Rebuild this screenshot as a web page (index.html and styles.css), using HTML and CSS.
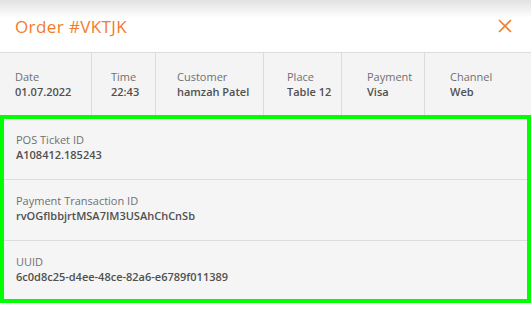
FILE: index.html
```
<!DOCTYPE html>
<html lang="en">
<head>
    <meta charset="UTF-8">
    <meta name="viewport" content="width=device-width, initial-scale=1.0">
    <title>Order #VKTJK</title>
    <link rel="stylesheet" href="styles.css">
</head>
<body>
    <div class="modal">
        <!-- Header -->
        <div class="modal-header">
            <h1 class="modal-title">Order #VKTJK</h1>
            <button class="close-btn" aria-label="Close">
                <svg width="14" height="14" viewBox="0 0 14 14">
                    <path d="M1 1L13 13M13 1L1 13" stroke="currentColor" stroke-width="1.6" fill="none"/>
                </svg>
            </button>
        </div>

        <!-- Order summary -->
        <div class="summary">
            <div class="summary-cell">
                <span class="label">Date</span>
                <span class="value">01.07.2022</span>
            </div>
            <div class="summary-cell">
                <span class="label">Time</span>
                <span class="value">22:43</span>
            </div>
            <div class="summary-cell">
                <span class="label">Customer</span>
                <span class="value">hamzah Patel</span>
            </div>
            <div class="summary-cell">
                <span class="label">Place</span>
                <span class="value">Table 12</span>
            </div>
            <div class="summary-cell">
                <span class="label">Payment</span>
                <span class="value">Visa</span>
            </div>
            <div class="summary-cell">
                <span class="label">Channel</span>
                <span class="value">Web</span>
            </div>
        </div>

        <!-- Identifiers -->
        <div class="ids">
            <div class="id-row">
                <span class="label">POS Ticket ID</span>
                <span class="value">A108412.185243</span>
            </div>
            <div class="id-row">
                <span class="label">Payment Transaction ID</span>
                <span class="value">rvOGflbbjrtMSA7IM3USAhChCnSb</span>
            </div>
            <div class="id-row">
                <span class="label">UUID</span>
                <span class="value">6c0d8c25-d4ee-48ce-82a6-e6789f011389</span>
            </div>
        </div>
    </div>
</body>
</html>
```

FILE: styles.css
```
body {
    margin: 0;
    font-family: "Open Sans", Arial, sans-serif;
    background: #fff;
    color: #555;
}
.modal {
    width: 531px;
}
.modal-header {
    height: 52px;
    display: flex;
    align-items: center;
    justify-content: space-between;
    padding: 0 19px 0 15px;
    background: linear-gradient(#e2e2e2, #fff 18px);
    border-bottom: 1px solid #dcdcdc;
    box-sizing: content-box;
}
.modal-title {
    margin: 0;
    font-size: 17px;
    letter-spacing: 0.4px;
    font-weight: normal;
    color: #f47b2a;
}
.close-btn {
    background: none;
    border: none;
    padding: 0;
    color: #f47b2a;
    cursor: pointer;
    display: flex;
}
.summary {
    display: flex;
    height: 62px;
    background: #f4f4f4;
}
.summary-cell {
    display: flex;
    flex-direction: column;
    justify-content: center;
    border-left: 1px solid #dcdcdc;
    box-sizing: border-box;
}
.summary-cell:nth-child(1) { width: 91px; padding-left: 15px; border-left: none; }
.summary-cell:nth-child(2) { width: 64px; padding-left: 19px; }
.summary-cell:nth-child(3) { width: 108px; padding-left: 21px; }
.summary-cell:nth-child(4) { width: 78px; padding-left: 23px; }
.summary-cell:nth-child(5) { width: 83px; padding-left: 25px; }
.summary-cell:nth-child(6) { flex: 1; padding-left: 25px; }
.label {
    display: block;
    font-size: 11px;
    line-height: 15px;
    color: #707070;
}
.value {
    display: block;
    font-size: 11px;
    line-height: 15px;
    font-weight: 600;
    color: #505050;
}
.ids {
    border: 4px solid #00ff00;
    background: #f5f5f5;
}
.id-row {
    height: 61px;
    padding: 13px 12px 0;
    box-sizing: border-box;
    border-bottom: 1px solid #dcdcdc;
}
.id-row:last-child {
    border-bottom: none;
    height: 58px;
}
```
